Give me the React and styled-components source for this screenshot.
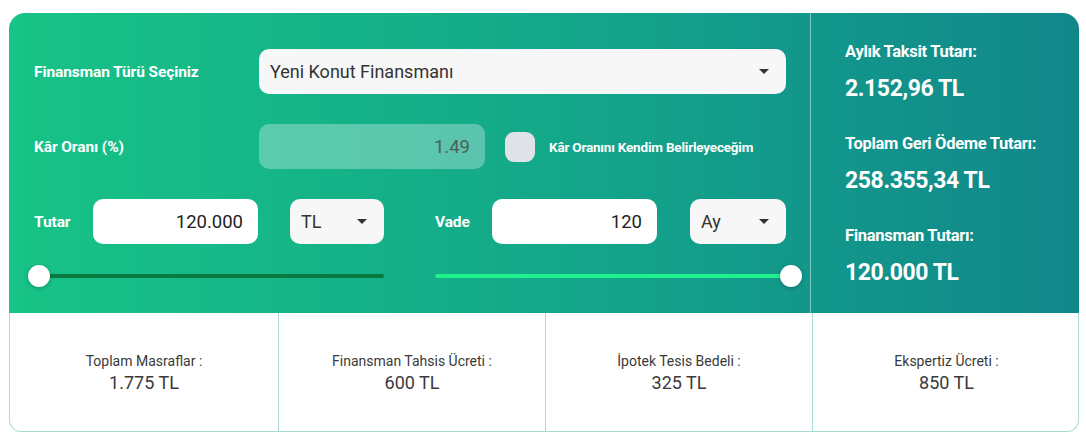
import React from "react";
import styled, { createGlobalStyle } from "styled-components";

const GlobalStyle = createGlobalStyle`
  body {
    margin: 0;
    background: #fff;
    font-family: Roboto, "Liberation Sans", sans-serif;
  }
`;

const Page = styled.div`
  padding: 13px 7px 0 9px;
`;

const Card = styled.div`
  width: 1070px;
`;

const Top = styled.div`
  display: flex;
  height: 300px;
  border-radius: 16px 16px 0 0;
  background: linear-gradient(90deg, #17c386 0%, #14ab89 45%, #12978b 75%, #11878a 100%);
`;

const Form = styled.div`
  width: 801px;
  box-sizing: border-box;
  padding: 36px 0 0 25px;
  display: flex;
  flex-direction: column;
  gap: 30px;
`;

const Row = styled.div`
  display: flex;
  align-items: center;
  height: 45px;
`;

const Label = styled.label`
  width: ${(p) => p.w}px;
  flex-shrink: 0;
  color: #fff;
  font-weight: 700;
  font-size: 15.5px;
  letter-spacing: -0.1px;
`;

const Select = styled.div`
  width: ${(p) => p.w}px;
  height: 45px;
  box-sizing: border-box;
  margin-left: ${(p) => p.ml || 0}px;
  padding: 0 11px;
  display: flex;
  align-items: center;
  justify-content: space-between;
  background: #f7f7f7;
  border-radius: 10px;
  color: #333;
  font-size: 18px;
`;

const Caret = styled.span`
  width: 0;
  height: 0;
  margin-right: 6px;
  border-left: 5px solid transparent;
  border-right: 5px solid transparent;
  border-top: 5px solid #333;
`;

const Input = styled.input`
  width: ${(p) => p.w}px;
  height: 45px;
  box-sizing: border-box;
  padding: 0 15px;
  border: none;
  outline: none;
  border-radius: 10px;
  background: ${(p) => (p.disabled ? "rgba(255,255,255,0.3)" : "#fff")};
  color: ${(p) => (p.disabled ? "#4d5e58" : "#222")};
  font-family: inherit;
  font-size: 18.5px;
  text-align: right;
`;

const Check = styled.span`
  width: 30px;
  height: 30px;
  margin: 0 14px 0 20px;
  border-radius: 9px;
  background: #dfe2e6;
`;

const CheckText = styled.span`
  color: #fff;
  font-weight: 700;
  font-size: 13.5px;
  letter-spacing: -0.2px;
`;

const Half = styled.div`
  display: flex;
  align-items: center;
  margin-right: ${(p) => p.mr || 0}px;
`;

const SliderRow = styled.div`
  display: flex;
  align-items: center;
  margin: -9px 0 0 -6px;
  gap: 29px;
`;

const Slider = styled.div`
  width: ${(p) => p.w}px;
  height: 22px;
  box-sizing: border-box;
  padding: 0 11px;
  display: flex;
  align-items: center;
`;

const Track = styled.div`
  position: relative;
  flex: 1;
  height: 4px;
  border-radius: 2px;
  background: #08793f;
`;

const Fill = styled.div`
  height: 100%;
  border-radius: 2px;
  background: #1ff28c;
`;

const Thumb = styled.span`
  position: absolute;
  top: 50%;
  width: 22px;
  height: 22px;
  border-radius: 50%;
  background: #fff;
  box-shadow: 0 1px 4px rgba(0, 0, 0, 0.25);
  transform: translate(-50%, -50%);
`;

const Summary = styled.div`
  flex: 1;
  border-left: 1px solid rgba(255, 255, 255, 0.45);
  padding: 29px 0 0 34px;
  color: #fff;
`;

const SumLabel = styled.div`
  font-size: 16.5px;
  font-weight: 700;
  letter-spacing: -0.3px;
  height: 20px;
`;

const SumValue = styled.div`
  font-size: 23px;
  font-weight: 700;
  letter-spacing: -0.4px;
  margin: 13px 0 32px;
`;

const Costs = styled.div`
  display: grid;
  grid-template-columns: 268px 267px 267px 268px;
  height: 119px;
  box-sizing: border-box;
  border: 1px solid #a9dcd4;
  border-top: none;
  border-radius: 0 0 12px 12px;
`;

const Cost = styled.div`
  display: flex;
  flex-direction: column;
  align-items: center;
  justify-content: center;
  gap: 3px;
  color: #3a3a3a;
  border-left: ${(p) => (p.first ? "none" : "1px solid #a9dcd4")};
  padding-top: 2px;
`;

const CostLabel = styled.div`
  font-size: 14px;
`;

const CostValue = styled.div`
  font-size: 18px;
`;

const sliders = [
  { w: 367, value: 0, fill: false },
  { w: 378, value: 100, fill: true },
];

const summary = [
  ["Aylık Taksit Tutarı:", "2.152,96 TL"],
  ["Toplam Geri Ödeme Tutarı:", "258.355,34 TL"],
  ["Finansman Tutarı:", "120.000 TL"],
];

const costs = [
  ["Toplam Masraflar :", "1.775 TL"],
  ["Finansman Tahsis Ücreti :", "600 TL"],
  ["İpotek Tesis Bedeli :", "325 TL"],
  ["Ekspertiz Ücreti :", "850 TL"],
];

export default function App() {
  return (
    <Page>
      <GlobalStyle />
      <Card>
        <Top>
          <Form>
            <Row>
              <Label w={225}>Finansman Türü Seçiniz</Label>
              <Select w={527}>
                Yeni Konut Finansmanı
                <Caret />
              </Select>
            </Row>
            <Row>
              <Label w={225}>Kâr Oranı (%)</Label>
              <Input w={226} disabled defaultValue="1.49" />
              <Check />
              <CheckText>Kâr Oranını Kendim Belirleyeceğim</CheckText>
            </Row>
            <Row>
              <Half mr={51}>
                <Label w={59}>Tutar</Label>
                <Input w={165} defaultValue="120.000" />
                <Select w={94} ml={32}>
                  TL
                  <Caret />
                </Select>
              </Half>
              <Half>
                <Label w={57}>Vade</Label>
                <Input w={165} defaultValue="120" />
                <Select w={96} ml={33}>
                  Ay
                  <Caret />
                </Select>
              </Half>
            </Row>
            <SliderRow>
              {sliders.map((s, i) => (
                <Slider key={i} w={s.w}>
                  <Track>
                    {s.fill && <Fill style={{ width: s.value + "%" }} />}
                    <Thumb style={{ left: s.value + "%" }} />
                  </Track>
                </Slider>
              ))}
            </SliderRow>
          </Form>
          <Summary>
            {summary.map(([l, v]) => (
              <div key={l}>
                <SumLabel>{l}</SumLabel>
                <SumValue>{v}</SumValue>
              </div>
            ))}
          </Summary>
        </Top>
        <Costs>
          {costs.map(([l, v], i) => (
            <Cost key={l} first={i === 0}>
              <CostLabel>{l}</CostLabel>
              <CostValue>{v}</CostValue>
            </Cost>
          ))}
        </Costs>
      </Card>
    </Page>
  );
}
